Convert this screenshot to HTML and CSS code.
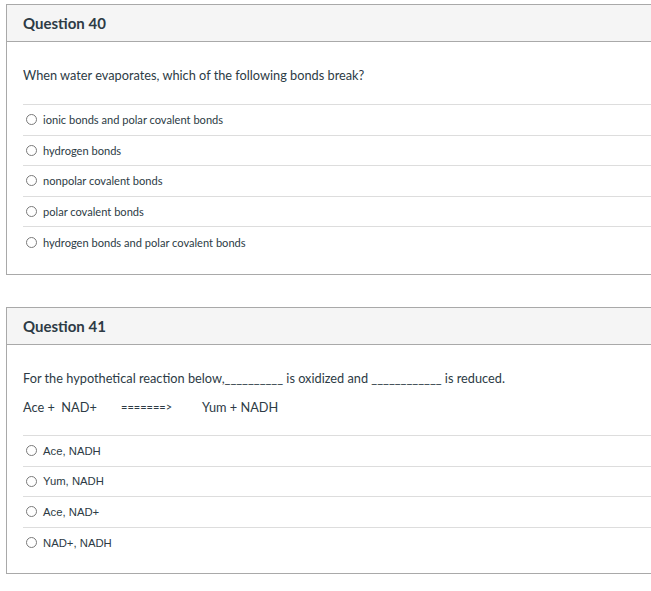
FILE: index.html
```html
<!DOCTYPE html>
<html>
<head>
<meta charset="utf-8">
<link rel="stylesheet" href="styles.css">
</head>
<body>
<div class="page">
  <section class="question q1">
    <header class="q-header"><h2 class="q-title">Question 40</h2></header>
    <div class="q-body">
      <p class="q-text">When water evaporates, which of the following bonds break?</p>
      <ul class="answers">
        <li class="answer"><span class="radio"></span><span class="label">ionic bonds and polar covalent bonds</span></li>
        <li class="answer"><span class="radio"></span><span class="label">hydrogen bonds</span></li>
        <li class="answer"><span class="radio"></span><span class="label">nonpolar covalent bonds</span></li>
        <li class="answer"><span class="radio"></span><span class="label">polar covalent bonds</span></li>
        <li class="answer"><span class="radio"></span><span class="label">hydrogen bonds and polar covalent bonds</span></li>
      </ul>
    </div>
  </section>
  <section class="question q2">
    <header class="q-header"><h2 class="q-title">Question 41</h2></header>
    <div class="q-body">
      <p class="q-text">For the hypothetical reaction below,__________ is oxidized and ____________ is reduced.</p>
      <p class="q-text reaction"><span class="r-left">Ace +&nbsp; NAD+</span><span class="r-arrow">=======&gt;</span><span class="r-right">Yum + NADH</span></p>
      <ul class="answers alt">
        <li class="answer"><span class="radio"></span><span class="label">Ace, NADH</span></li>
        <li class="answer"><span class="radio"></span><span class="label">Yum, NADH</span></li>
        <li class="answer"><span class="radio"></span><span class="label">Ace, NAD+</span></li>
        <li class="answer"><span class="radio"></span><span class="label">NAD+, NADH</span></li>
      </ul>
    </div>
  </section>
</div>
</body>
</html>
```

FILE: styles.css
```css
html, body {
  margin: 0;
  padding: 0;
  overflow: hidden;
  background: #fff;
}
body {
  font-family: Lato, "Liberation Sans", sans-serif;
  color: #2d3b45;
}
.page {
  padding: 4px 0 0 6px;
}
.question {
  border: 1px solid #a9a9a9;
  border-right: none;
  width: 660px;
}
.q2 {
  margin-top: 32px;
}
.q-header {
  background: #f5f5f5;
  border-bottom: 1px solid #a9a9a9;
  height: 36px;
  display: flex;
  align-items: center;
  padding-left: 16px;
}
.q-title {
  margin: 0;
  font-size: 15px;
  font-weight: 700;
  color: #2d3b45;
}
.q-body {
  padding: 24px 0 17px 16px;
}
.q2 .q-body {
  padding-bottom: 16px;
}
.q-text {
  margin: 0;
  font-size: 12.75px;
  line-height: 18px;
}
.reaction {
  margin-top: 11px;
  display: flex;
}
.r-left { width: 98px; }
.r-arrow { width: 81px; font-size: 11px; }
.answers {
  list-style: none;
  margin: 20px 0 0;
  padding: 0;
}
.q2 .answers {
  margin-top: 19px;
}
.answer {
  border-top: 1px solid #ddd;
  height: 29.6px;
  display: flex;
  align-items: center;
  padding-left: 3px;
  font-size: 11.1px;
}
.radio {
  width: 9px;
  height: 9px;
  border: 1px solid #7a7a7a;
  border-radius: 50%;
  margin-right: 6px;
  flex: none;
}
.alt .answer {
  font-size: 11.3px;
  font-family: "Liberation Sans", Lato, sans-serif;
}
```
